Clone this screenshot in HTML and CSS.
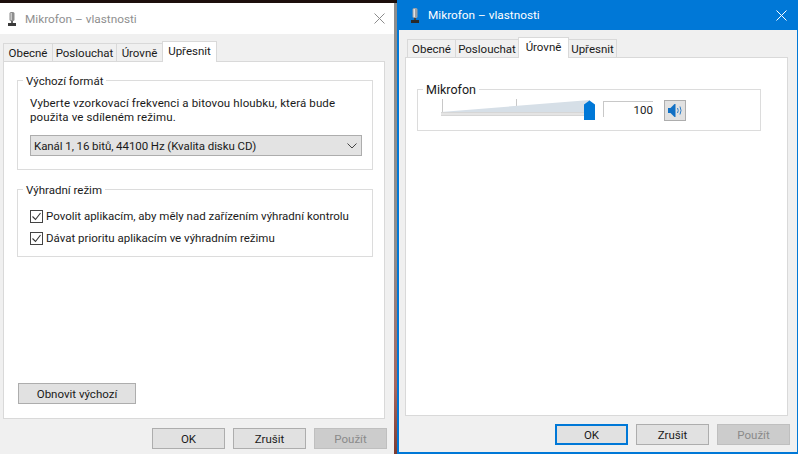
FILE: index.html
```html
<!DOCTYPE html>
<html lang="cs">
<head>
<meta charset="utf-8">
<title>Mikrofon – vlastnosti</title>
<link rel="stylesheet" href="styles.css">
</head>
<body>
<div class="desktop">
  <section class="win win-left">
    <header class="titlebar">
      <svg class="mic" width="8" height="14" viewBox="0 0 8 14"><rect x="1.500" y="0" width="5" height="9" rx="1.500" fill="#8e8e8e"/><rect x="2.500" y="1" width="1.500" height="7" fill="#c8c8c8"/><rect x="3" y="9" width="2" height="2" fill="#666"/><rect x="0" y="11" width="8" height="3" fill="#3a3a3a"/></svg>
      <span class="title">Mikrofon – vlastnosti</span>
      <svg class="close" width="11" height="11" viewBox="0 0 11 11"><path d="M.5.5l10 10M10.500.5l-10 10" stroke="#8c8c8c" stroke-width="1" fill="none"/></svg>
    </header>
    <div class="client">
      <nav class="tabs">
        <span class="tab t-obecne">Obecné</span><span class="tab t-poslouchat">Poslouchat</span><span class="tab t-urovne">Úrovně</span><span class="tab t-upresnit active">Upřesnit</span>
      </nav>
      <main class="panel panel-adv">
        <fieldset class="group group-format">
          <legend>Výchozí formát</legend>
          <p class="desc">Vyberte vzorkovací frekvenci a bitovou hloubku, která bude použita ve sdíleném režimu.</p>
          <div class="select"><span>Kanál 1, 16 bitů, 44100 Hz (Kvalita disku CD)</span>
            <svg width="10" height="6" viewBox="0 0 10 6"><path d="M.5.500L5 5 9.500.5" stroke="#444" fill="none"/></svg>
          </div>
        </fieldset>
        <fieldset class="group group-excl">
          <legend>Výhradní režim</legend>
          <label class="check"><svg width="13" height="13" viewBox="0 0 13 13"><rect x=".5" y=".5" width="12" height="12" fill="#fff" stroke="#444"/><path d="M2.500 6.500l3 3 5-6.500" stroke="#333" stroke-width="1.100" fill="none"/></svg>Povolit aplikacím, aby měly nad zařízením výhradní kontrolu</label>
          <label class="check"><svg width="13" height="13" viewBox="0 0 13 13"><rect x=".5" y=".5" width="12" height="12" fill="#fff" stroke="#444"/><path d="M2.500 6.500l3 3 5-6.500" stroke="#333" stroke-width="1.100" fill="none"/></svg>Dávat prioritu aplikacím ve výhradním režimu</label>
        </fieldset>
        <button class="btn btn-reset" type="button">Obnovit výchozí</button>
      </main>
      <footer class="actions">
        <button class="btn" type="button">OK</button>
        <button class="btn" type="button">Zrušit</button>
        <button class="btn disabled" type="button">Použít</button>
      </footer>
    </div>
  </section>

  <div class="seam"></div>

  <section class="win win-right">
    <header class="titlebar">
      <svg class="mic" width="8" height="15" viewBox="0 0 8 15"><rect x="1.500" y="0" width="5" height="10" rx="1.500" fill="#9aa0a6"/><rect x="2.500" y="1" width="1.500" height="8" fill="#dfe3e6"/><rect x="3" y="10" width="2" height="2" fill="#444"/><rect x="0" y="12" width="8" height="3" fill="#2a2a2a"/></svg>
      <span class="title">Mikrofon – vlastnosti</span>
      <svg class="close" width="11" height="11" viewBox="0 0 11 11"><path d="M.5.5l10 10M10.500.5l-10 10" stroke="#fff" stroke-width="1" fill="none"/></svg>
    </header>
    <div class="client">
      <nav class="tabs">
        <span class="tab t-obecne">Obecné</span><span class="tab t-poslouchat">Poslouchat</span><span class="tab t-urovne active">Úrovně</span><span class="tab t-upresnit">Upřesnit</span>
      </nav>
      <main class="panel panel-levels">
        <fieldset class="group group-level">
          <legend>Mikrofon</legend>
          <div class="level-row">
            <div class="slider">
              <svg width="156" height="28" viewBox="0 0 156 28">
                <path d="M1.500 3v13M75.500 3v13" stroke="#c8c8c8"/>
                <path d="M0 16L149 4v12z" fill="#d6dfe7"/>
                <rect x="0" y="16" width="149" height="4" fill="#e4e4e4"/>
                <path d="M0 16.500h149M0 19.500h149" stroke="#d6d6d6"/>
                <path d="M143 8.500L148.500 4.500l5.500 4V24h-11z" fill="#0078d7"/>
              </svg>
            </div>
            <div class="value">100</div>
            <div class="speaker">
              <svg width="16" height="15" viewBox="0 0 16 15"><path d="M1 5h2.500L7.500 1h1v13h-1L3.500 10H1z" fill="#1170c4"/><path d="M10.500 5q1.500 2.500 0 5M13 3.500q2 4 0 8" stroke="#2f7fc8" fill="none"/></svg>
            </div>
          </div>
        </fieldset>
      </main>
      <footer class="actions">
        <button class="btn default" type="button">OK</button>
        <button class="btn" type="button">Zrušit</button>
        <button class="btn disabled" type="button">Použít</button>
      </footer>
    </div>
  </section>
</div>
</body>
</html>
```
FILE: styles.css
```css
* { box-sizing: border-box; }
html, body { margin: 0; padding: 0; }
body {
  width: 798px;
  height: 454px;
  overflow: hidden;
  background: #1d0f0c;
  font-family: Roboto, "Noto Sans", sans-serif;
  font-size: 11.500px;
  color: #1a1a1a;
}
.desktop { position: relative; width: 798px; height: 454px; }

.win { position: absolute; display: flex; flex-direction: column; }
.win-left { left: 0; top: 3px; width: 394px; height: 451px; background: #f0f0f0; }
.win-right {
  left: 397px; top: 0; width: 401px; height: 454px;
  background: #f0f0f0;
  border: solid #0078d7;
  border-width: 0 1px 2px 2px;
}
.seam {
  position: absolute; left: 394px; top: 3px; width: 3px; height: 451px;
  background: linear-gradient(#8d8d8d 0, #8d8d8d 55%, #a8655c 85%, #7d3c32 100%);
}

.titlebar { display: flex; align-items: center; flex: none; }
.win-left .titlebar { height: 31px; background: #fff; color: #8f8f8f; padding: 0 9px 0 8px; }
.win-right .titlebar { height: 30px; background: #0078d7; color: #fff; padding: 0 10px 0 12px; }
.title { font-size: 11.800px; margin-left: 9px; flex: 1; }

.client { flex: 1; display: flex; flex-direction: column; min-height: 0; }
.win-left .client { padding: 8px 9px 0 3px; }
.win-right .client { padding: 7px 9px 0 6px; }

.tabs { display: flex; align-items: flex-end; flex: none; height: 19px; position: relative; z-index: 1; }
.win-right .tabs { height: 20px; padding-left: 2px; }
.tab {
  display: flex; align-items: center; justify-content: center;
  height: 18px;
  background: #f0f0f0;
  border: 1px solid #d9d9d9;
  border-bottom: 0;
  margin-right: -1px;
  white-space: nowrap;
}
.tab.active { height: 21px; background: #fff; margin-bottom: -1px; padding-bottom: 2px; position: relative; }
.t-obecne { width: 50px; }
.t-poslouchat { width: 65px; }
.t-urovne { width: 47px; }
.t-upresnit { width: 55px; }
.win-right .t-obecne { width: 49px; }
.win-right .t-poslouchat { width: 64px; }
.win-right .t-urovne { width: 51px; }
.win-right .t-upresnit { width: 49px; }

.panel { flex: none; background: #fff; border: 1px solid #d9d9d9; display: flex; flex-direction: column; }
.panel-adv { height: 358px; padding: 10px 11px 14px 13px; }
.panel-levels { height: 359px; padding: 23px 26px 0 11px; }

.group { border: 1px solid #dcdcdc; margin: 0; min-width: 0; padding: 0 10px 0 12px; }
.group legend { padding: 2px 3px 0; margin-left: -7px; line-height: 14px; }
.group-format { height: 98px; padding-top: 8px; }
.group-excl { height: 76px; margin-top: 11px; padding-top: 8px; }
.desc { margin: 0; line-height: 14px; letter-spacing: .12px; }
.select {
  display: flex; align-items: center; justify-content: space-between;
  height: 21px; margin-top: 11px; padding: 0 4px 0 3px;
  background: #e3e3e3; border: 1px solid #adadad;
  letter-spacing: -.08px;
}
.check { display: flex; align-items: center; gap: 3px; height: 22px; white-space: nowrap; }

.btn {
  width: 73px; height: 21px; padding: 0;
  font: inherit; color: #1a1a1a;
  background: #e1e1e1; border: 1px solid #adadad;
}
.btn.disabled { background: #cccccc; border-color: #bfbfbf; color: #8a8a8a; }
.btn.default { border: 2px solid #0078d7; }
.btn-reset { width: 118px; margin-top: auto; margin-left: 1px; }

.actions { flex: 1; display: flex; justify-content: flex-end; gap: 8px; padding-top: 9px; }
.win-left .actions { margin-right: -2px; }
.win-right .actions { margin-right: -2px; padding-top: 8px; }

.group-level { height: 50px; padding: 0 0 0 23px; }
.group-level legend { margin-left: -18px; font-size: 12.500px; }
.level-row { display: flex; align-items: flex-start; margin-top: -1px; }
.slider { width: 162px; height: 28px; }
.value {
  width: 50px; height: 16px; margin-top: 5px; text-align: right; line-height: 16px;
  border: 1px solid #c8c8c8; border-width: 1px 0 0 1px;
}
.speaker {
  width: 22px; height: 21px; margin-top: 4px; margin-left: 11px;
  display: flex; align-items: center; justify-content: center;
  background: #e1e1e1; border: 1px solid #adadad;
}
```
